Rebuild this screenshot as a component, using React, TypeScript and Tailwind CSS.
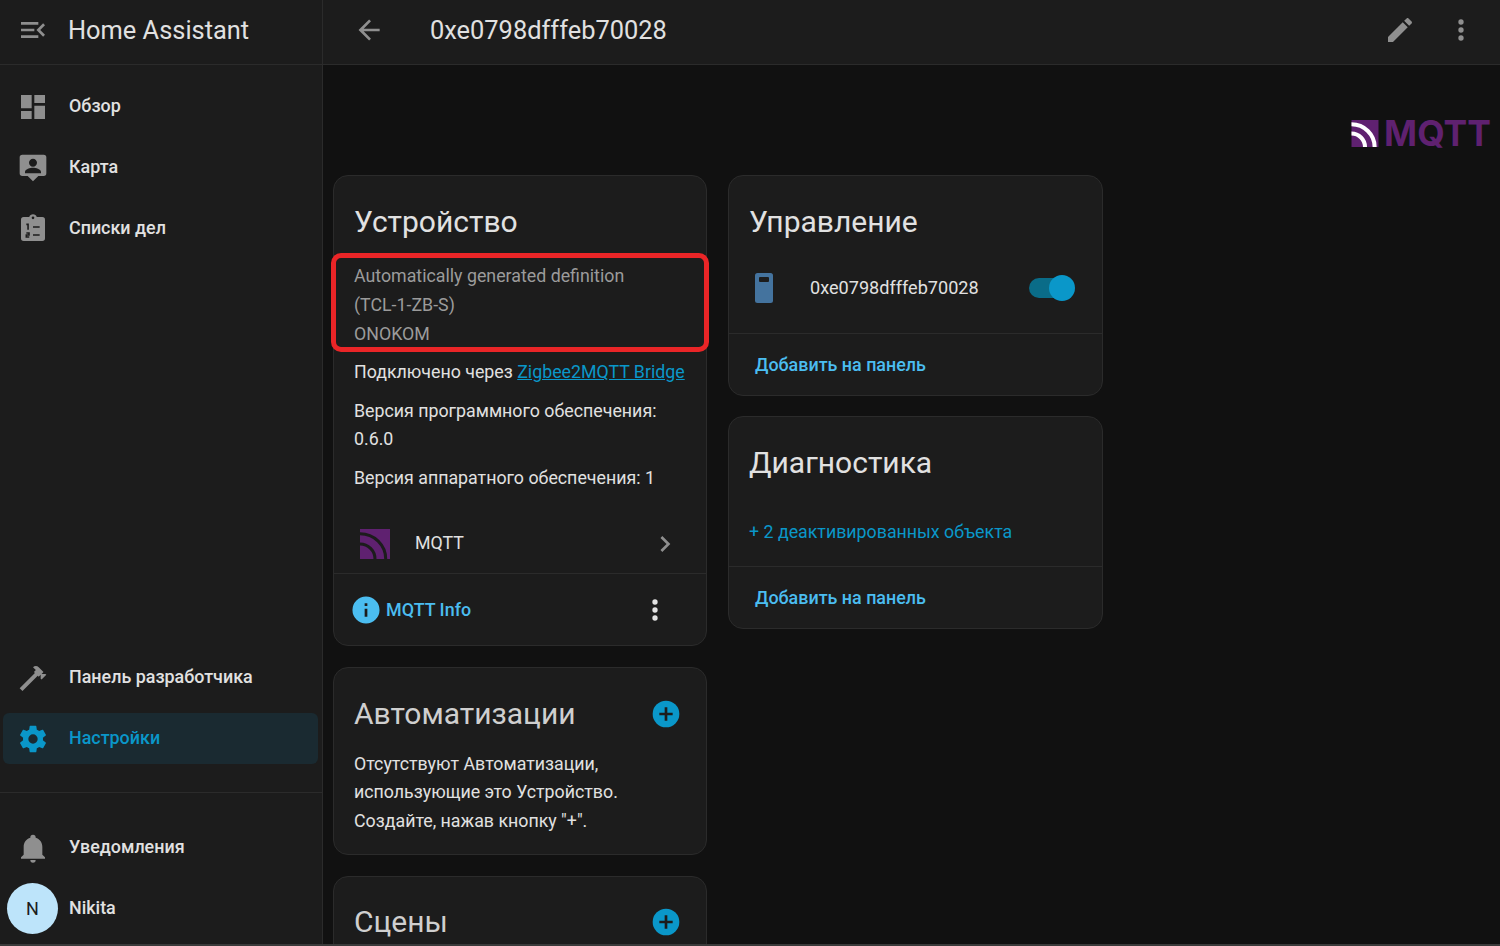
import type { ReactNode } from "react"

const font = "font-['Roboto',sans-serif]"

const paths = {
  menu: "M21,15.61L19.59,17L14.58,12L19.59,7L21,8.39L17.44,12L21,15.61M3,6H16V8H3V6M3,13V11H13V13H3M3,18V16H16V18H3Z",
  dashboard: "M13,3V9H21V3M13,21H21V11H13M3,21H11V15H3M3,13H11V3H3V13Z",
  map: "M20,2H4A2,2 0 0,0 2,4V16A2,2 0 0,0 4,18H8L12,22L16,18H20A2,2 0 0,0 22,16V4A2,2 0 0,0 20,2M12,5C13.66,5 15,6.34 15,8C15,9.66 13.66,11 12,11C10.34,11 9,9.66 9,8C9,6.34 10.34,5 12,5M18,16H6V15C6,13 10,11.9 12,11.9C14,11.9 18,13 18,15V16Z",
  hammer: "M2 19.63L13.43 8.2L12.72 7.5L14.14 6.07L12 3.89C13.2 2.7 15.09 2.7 16.27 3.89L19.87 7.5L18.45 8.91H21.29L22 9.62L18.45 13.21L17.74 12.5V9.62L16.27 11.04L15.56 10.33L4.13 21.76L2 19.63Z",
  cog: "M12,15.5A3.5,3.5 0 0,1 8.5,12A3.5,3.5 0 0,1 12,8.5A3.5,3.5 0 0,1 15.5,12A3.5,3.5 0 0,1 12,15.5M19.43,12.97C19.47,12.65 19.5,12.33 19.5,12C19.5,11.67 19.47,11.34 19.43,11L21.54,9.37C21.73,9.22 21.78,8.95 21.66,8.73L19.66,5.27C19.54,5.05 19.27,4.96 19.05,5.05L16.56,6.05C16.04,5.66 15.5,5.32 14.87,5.07L14.5,2.42C14.46,2.18 14.25,2 14,2H10C9.75,2 9.54,2.18 9.5,2.42L9.13,5.07C8.5,5.32 7.96,5.66 7.44,6.05L4.95,5.05C4.73,4.96 4.46,5.05 4.34,5.27L2.34,8.73C2.21,8.95 2.27,9.22 2.46,9.37L4.57,11C4.53,11.34 4.5,11.67 4.5,12C4.5,12.33 4.53,12.65 4.57,12.97L2.46,14.63C2.27,14.78 2.21,15.05 2.34,15.27L4.34,18.73C4.46,18.95 4.73,19.03 4.95,18.95L7.44,17.94C7.96,18.34 8.5,18.68 9.13,18.93L9.5,21.58C9.54,21.82 9.75,22 10,22H14C14.25,22 14.46,21.82 14.5,21.58L14.87,18.93C15.5,18.67 16.04,18.34 16.56,17.94L19.05,18.95C19.27,19.03 19.54,18.95 19.66,18.73L21.66,15.27C21.78,15.05 21.73,14.78 21.54,14.63L19.43,12.97Z",
  bell: "M21,19V20H3V19L5,17V11C5,7.9 7.03,5.17 10,4.29C10,4.19 10,4.1 10,4A2,2 0 0,1 12,2A2,2 0 0,1 14,4C14,4.1 14,4.19 14,4.29C16.97,5.17 19,7.9 19,11V17L21,19M14,21A2,2 0 0,1 12,23A2,2 0 0,1 10,21",
  back: "M20,11V13H8L13.5,18.5L12.08,19.92L4.16,12L12.08,4.08L13.5,5.5L8,11H20Z",
  pencil: "M20.71,7.04C21.1,6.65 21.1,6 20.71,5.63L18.37,3.29C18,2.9 17.35,2.9 16.96,3.29L15.12,5.12L18.87,8.87M3,17.25V21H6.75L17.81,9.93L14.06,6.18L3,17.25Z",
  dots: "M12,16A2,2 0 0,1 14,18A2,2 0 0,1 12,20A2,2 0 0,1 10,18A2,2 0 0,1 12,16M12,10A2,2 0 0,1 14,12A2,2 0 0,1 12,14A2,2 0 0,1 10,12A2,2 0 0,1 12,10M12,4A2,2 0 0,1 14,6A2,2 0 0,1 12,8A2,2 0 0,1 10,6A2,2 0 0,1 12,4Z",
  info: "M13,9H11V7H13M13,17H11V11H13M12,2A10,10 0 0,0 2,12A10,10 0 0,0 12,22A10,10 0 0,0 22,12A10,10 0 0,0 12,2Z",
  chevron: "M8.59,16.58L13.17,12L8.59,7.41L10,6L16,12L10,18L8.59,16.58Z",
}

function Icon({ d, className }: { d: string; className: string }) {
  return (
    <svg viewBox="0 0 24 24" className={className} fill="currentColor">
      <path d={d} />
    </svg>
  )
}

function TodoIcon() {
  return (
    <svg viewBox="0 0 24 24" className="w-8 h-8 text-[#8f8f8f]" fill="currentColor">
      <path d="M19,3H14.82C14.4,1.84 13.3,1 12,1C10.7,1 9.6,1.84 9.18,3H5A2,2 0 0,0 3,5V19A2,2 0 0,0 5,21H19A2,2 0 0,0 21,19V5A2,2 0 0,0 19,3Z" />
      <circle cx="12" cy="3.6" r="1" fill="#1c1c1c" />
      <path d="M7,8.5H8.3V12.5M12,10.5H17M7,15H9V16.5H7V18H9.2M12,16.5H17" fill="none" stroke="#1c1c1c" strokeWidth="1.2" />
    </svg>
  )
}

function MqttMark({ className, gap, width }: { className: string; gap: string; width: number }) {
  // purple square with the broadcast arcs cut out of it
  return (
    <svg viewBox="0 0 28 28" className={className}>
      <rect width="28" height="28" fill="#5f2170" />
      <g fill="none" stroke={gap} strokeWidth={width}>
        <path d="M0,4.5C13.25,4.5 24,15 24,28" />
        <path d="M0,14C7.7,14 14,20.3 14,28" />
      </g>
    </svg>
  )
}

function NavItem({ icon, label, active }: { icon: ReactNode; label: string; active?: boolean }) {
  return (
    <div
      className={`h-[51px] ml-[3px] mr-[4px] rounded-[6px] flex items-center font-medium text-[17.9px] ${
        active ? "bg-[#1a2a31] text-[#0a97c9]" : "text-[#e1e1e1]"
      }`}
    >
      <div className="w-[66px] pl-[14px] shrink-0">{icon}</div>
      <span>{label}</span>
    </div>
  )
}

function Card({ children }: { children: ReactNode }) {
  return <div className="bg-[#1c1c1c] border border-[#2b2b2b] rounded-[15px]">{children}</div>
}

function Title({ children, dim }: { children: ReactNode; dim?: boolean }) {
  return <div className={`text-[30px] leading-[40px] ${dim ? "text-[#cfcfcf]" : "text-[#e1e1e1]"}`}>{children}</div>
}

function AddLink() {
  return <div className="text-[#4bbdf0] font-medium text-[17.9px]">Добавить на панель</div>
}

function PlusButton() {
  return (
    <svg viewBox="0 0 24 24" className="w-8 h-8">
      <circle cx="12" cy="12" r="10" fill="#0a97c9" />
      <path d="M17,13H13V17H11V13H7V11H11V7H13V11H17Z" fill="#1c1c1c" />
    </svg>
  )
}

export default function App() {
  return (
    <div className={`${font} relative w-[1500px] h-[946px] overflow-hidden flex bg-[#111111] text-[#e1e1e1]`}>
      <aside className="w-[323px] shrink-0 bg-[#1c1c1c] border-r border-[#2b2b2b] flex flex-col">
        <div className="h-[65px] shrink-0 border-b border-[#2b2b2b] flex items-center pb-[4px]">
          <div className="w-[68px] pl-[17px] shrink-0">
            <Icon d={paths.menu} className="w-8 h-8 text-[#8f8f8f]" />
          </div>
          <span className="text-[25.4px]">Home Assistant</span>
        </div>
        <div className="pt-[16px] flex flex-col gap-[10px]">
          <NavItem icon={<Icon d={paths.dashboard} className="w-8 h-8 text-[#8f8f8f]" />} label="Обзор" />
          <NavItem icon={<Icon d={paths.map} className="w-8 h-8 text-[#8f8f8f]" />} label="Карта" />
          <NavItem icon={<TodoIcon />} label="Списки дел" />
        </div>
        <div className="mt-auto flex flex-col gap-[10px]">
          <NavItem icon={<Icon d={paths.hammer} className="w-8 h-8 text-[#8f8f8f]" />} label="Панель разработчика" />
          <NavItem icon={<Icon d={paths.cog} className="w-8 h-8 text-[#0a97c9]" />} label="Настройки" active />
        </div>
        <div className="mt-[28px] pt-[29px] border-t border-[#2b2b2b] flex flex-col gap-[10px] pb-[12px]">
          <NavItem icon={<Icon d={paths.bell} className="w-8 h-8 text-[#8f8f8f]" />} label="Уведомления" />
          <div className="h-[51px] flex items-center font-medium text-[17.9px]">
            <div className="w-[69px] pl-[7px] shrink-0">
              <div className="w-[51px] h-[51px] rounded-full bg-[#bde4fa] text-[#1c1c1c] text-[18px] font-normal flex items-center justify-center">
                N
              </div>
            </div>
            <span>Nikita</span>
          </div>
        </div>
      </aside>

      <div className="flex-1 flex flex-col min-w-0">
        <header className="h-[65px] shrink-0 bg-[#1c1c1c] border-b border-[#2b2b2b] flex items-center pl-[30px] pr-[23px] pb-[4px]">
          <Icon d={paths.back} className="w-8 h-8 text-[#8f8f8f]" />
          <span className="ml-[45px] text-[25.4px]">0xe0798dfffeb70028</span>
          <Icon d={paths.pencil} className="ml-auto w-8 h-8 text-[#8f8f8f]" />
          <Icon d={paths.dots} className="ml-[29px] w-8 h-8 text-[#8f8f8f]" />
        </header>

        <main className="flex-1 min-h-0 px-[10px] overflow-hidden">
          <div className="h-[110px] flex items-center justify-end pt-[27px]">
            <MqttMark className="w-[28px] h-[27px] mr-[5px]" gap="#ffffff" width={4.2} />
            <span className="text-[35.5px] leading-none font-bold text-[#5f2170] font-['Inter',sans-serif] mr-[-1px]">
              MQTT
            </span>
          </div>

          <div className="flex gap-[21px] items-start">
            <div className="w-[374px] flex flex-col gap-[21px] relative">
              <Card>
                <div className="px-[20px] pt-[26px]">
                  <Title>Устройство</Title>
                  <div className="mt-[20px] text-[17.8px] leading-[28.75px] text-[#9b9b9b]">
                    <div>Automatically generated definition</div>
                    <div>(TCL-1-ZB-S)</div>
                    <div>ONOKOM</div>
                  </div>
                  <div className="mt-[9.75px] text-[17.8px] leading-[28.5px]">
                    Подключено через <span className="text-[#0a97c9] underline">Zigbee2MQTT Bridge</span>
                  </div>
                  <div className="mt-[10px] text-[17.8px] leading-[28.5px]">
                    <div>Версия программного обеспечения:</div>
                    <div>0.6.0</div>
                  </div>
                  <div className="mt-[10px] text-[17.8px] leading-[28.5px]">Версия аппаратного обеспечения: 1</div>
                </div>
                <div className="h-[82px] border-b border-[#2b2b2b] flex items-center pl-[26px] pr-[25px] pt-[22px]">
                  <MqttMark className="w-[30px] h-[30px]" gap="#1c1c1c" width={2.8} />
                  <span className="ml-[25px] text-[17.8px]">MQTT</span>
                  <Icon d={paths.chevron} className="ml-auto w-8 h-8 text-[#8f8f8f]" />
                </div>
                <div className="h-[71px] flex items-center pl-[19px] pr-[35px] pt-[1px]">
                  <Icon d={paths.info} className="w-[26px] h-[26px] text-[#4bbdf0] scale-125" />
                  <span className="ml-[7px] text-[#4bbdf0] font-medium text-[17.9px]">MQTT Info</span>
                  <Icon d={paths.dots} className="ml-auto w-8 h-8 text-[#e1e1e1]" />
                </div>
              </Card>

              <Card>
                <div className="px-[20px] pt-[26px] pb-[19px]">
                  <div className="flex items-center justify-between pr-[4px]">
                    <Title dim>Автоматизации</Title>
                    <PlusButton />
                  </div>
                  <div className="mt-[15.5px] text-[17.8px] leading-[28.5px]">
                    <div>Отсутствуют Автоматизации,</div>
                    <div>использующие это Устройство.</div>
                    <div>Создайте, нажав кнопку "+".</div>
                  </div>
                </div>
              </Card>

              <Card>
                <div className="px-[20px] pt-[25px] pb-[20px]">
                  <div className="flex items-center justify-between pr-[4px]">
                    <Title dim>Сцены</Title>
                    <PlusButton />
                  </div>
                </div>
              </Card>

              {/* red annotation drawn over the screenshot */}
              <div className="absolute left-[-2px] top-[78px] w-[378px] h-[99px] border-[5px] border-[#ea2527] rounded-[10px]" />
            </div>

            <div className="w-[375px] flex flex-col gap-[20px]">
              <Card>
                <div className="px-[20px] pt-[26px]">
                  <Title>Управление</Title>
                </div>
                <div className="h-[92px] border-b border-[#2b2b2b] flex items-center pl-[26px] pr-[27px] pt-[1px]">
                  <svg viewBox="0 0 18 30" className="w-[18px] h-[30px]">
                    <rect width="18" height="30" rx="2.5" fill="#44739e" />
                    <rect x="4" y="4" width="10" height="5" rx="1" fill="#1c1c1c" />
                  </svg>
                  <span className="ml-[37px] text-[18.1px]">0xe0798dfffeb70028</span>
                  <div className="ml-auto relative w-[46px] h-[26px] flex items-center">
                    <div className="w-[44px] h-[20px] rounded-full bg-[#0a6c88]" />
                    <div className="absolute right-0 top-0 w-[26px] h-[26px] rounded-full bg-[#0a97c9]" />
                  </div>
                </div>
                <div className="h-[61px] flex items-center pl-[26px] pt-[2px]">
                  <AddLink />
                </div>
              </Card>

              <Card>
                <div className="px-[20px] pt-[26px]">
                  <Title>Диагностика</Title>
                </div>
                <div className="h-[84px] border-b border-[#2b2b2b] flex items-center px-[20px] pt-[16px] text-[17.8px] text-[#0a97c9]">
                  + 2 деактивированных объекта
                </div>
                <div className="h-[61px] flex items-center pl-[26px] pt-[2px]">
                  <AddLink />
                </div>
              </Card>
            </div>
          </div>
        </main>
      </div>

      <div className="absolute left-0 right-0 bottom-0 h-[2px] bg-[#3a3a3a]" />
    </div>
  )
}
